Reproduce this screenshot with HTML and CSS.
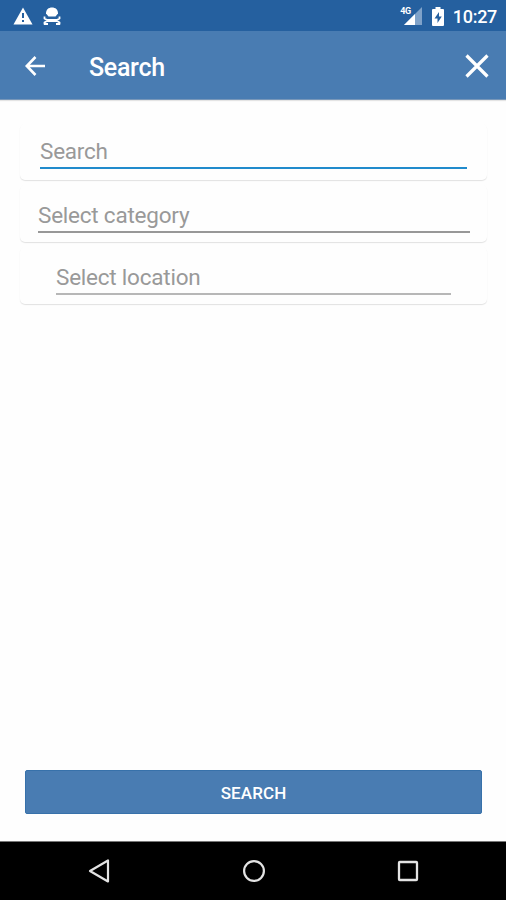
FILE: index.html
```html
<!DOCTYPE html>
<html lang="en">
<head>
<meta charset="utf-8">
<title>Search</title>
<link rel="stylesheet" href="styles.css">
</head>
<body>
<div class="status-bar">
  <svg class="warning" width="20" height="18" viewBox="0 0 20 18"><path d="M10 .5 19.500 17.500H.5Z" fill="#fff"/><path d="M10 6v5M10 13v2" stroke="#25609f" stroke-width="2"/></svg>
  <svg class="debug" width="18" height="19" viewBox="0 0 18 19" fill="none" stroke="#fff"><path d="M3 6.500C3 2.500 5.500 .5 9 .5s6 2 6 6L12.500 9.500h-7Z" fill="#fff" stroke="none"/><path d="M1.500 9.500v2l2.500 1.500h10l2.500-1.500v-2M1.500 17.500v-2L4 14h10l2.500 1.500v2" stroke-width="1.800"/><path d="M1 17h4M13 17h4" stroke-width="2"/></svg>
  <span class="spacer"></span>
  <span class="signal"><span class="network">4G</span><svg width="18" height="18" viewBox="0 0 18 18"><path d="M0 18 18 0V18Z" fill="#7fa2c9"/><path d="M0 18 11 7V18Z" fill="#fff"/></svg></span>
  <svg class="battery" width="12" height="19" viewBox="0 0 12 19"><path d="M3.500 0h5v2H11q1 0 1 1v15q0 1-1 1H1q-1 0-1-1V3q0-1 1-1h2.500Z" fill="#fff"/><path d="M7 5 2.500 11.500h3V16L9.800 9.500H7Z" fill="#25609f"/></svg>
  <span class="clock">10:27</span>
</div>
<header class="app-bar">
  <svg class="back" width="22" height="20" viewBox="0 0 22 20" fill="none" stroke="#fff" stroke-width="2.600"><path d="M21 10H3M11.500 1 2.800 10l8.700 9"/></svg>
  <h1 class="title">Search</h1>
  <svg class="close" width="24" height="24" viewBox="0 0 24 24" fill="none" stroke="#fff" stroke-width="3.200"><path d="M1.500 1.500l21 21M22.500 1.500l-21 21"/></svg>
</header>
<main class="content">
  <div class="card card-search"><div class="field focused"><span class="hint">Search</span></div></div>
  <div class="card card-category"><div class="field"><span class="hint">Select category</span></div></div>
  <div class="card card-location"><div class="field"><span class="hint">Select location</span></div></div>
  <button class="submit" type="button">SEARCH</button>
</main>
<nav class="nav-bar">
  <svg width="24" height="26" viewBox="0 0 24 26" fill="none" stroke="#e4e4e4" stroke-width="2.200" stroke-linejoin="round"><path d="M21 2.500v21L3 13Z"/></svg>
  <svg width="24" height="26" viewBox="0 0 24 26" fill="none" stroke="#e4e4e4" stroke-width="2.200"><circle cx="12" cy="13" r="9.900"/></svg>
  <svg width="24" height="26" viewBox="0 0 24 26" fill="none" stroke="#e4e4e4" stroke-width="2.300"><rect x="3" y="4" width="18" height="18" rx=".8"/></svg>
</nav>
</body>
</html>
```
FILE: styles.css
```css
* { box-sizing: border-box; }
body {
  margin: 0;
  width: 506px;
  height: 900px;
  display: flex;
  flex-direction: column;
  font-family: Roboto, sans-serif;
  background: #fefefe;
  overflow: hidden;
}
svg { display: block; flex: none; }
.status-bar {
  height: 31px;
  display: flex;
  align-items: center;
  padding: 2px 9px 0 13px;
  background: #25609f;
  color: #fff;
}
.warning { margin-top: -2px; }
.debug { margin-left: 10px; }
.spacer { flex: 1; }
.signal { display: flex; align-items: flex-start; margin-top: -2px; }
.network { font-size: 9px; line-height: 9px; font-weight: 700; letter-spacing: -0.3px; margin-right: -7px; position: relative; }
.battery { margin-left: 10px; margin-top: -1px; }
.clock { margin-left: 9px; font-size: 18px; line-height: 20px; font-weight: 500; letter-spacing: -0.3px; }
.app-bar {
  height: 69px;
  display: flex;
  align-items: center;
  padding: 1px 17px 0 24px;
  background: #497cb2;
  border-bottom: 1px solid #7897b9;
  box-shadow: 0 1px 1px #e4e4e4;
  color: #fff;
}
.title { flex: 1; margin: 4px 0 0 43px; font-size: 25px; line-height: 30px; font-weight: 500; letter-spacing: -0.3px; }
.content {
  flex: 1;
  display: flex;
  flex-direction: column;
  padding: 24px 19px 27px 20px;
}
.card {
  height: 57px;
  border-radius: 5px;
  background: #fefefe;
  box-shadow: 0 1px 1px #e2e2e2;
  margin-bottom: 5px;
}
.card-search { height: 56px; padding: 12px 20px 0; }
.card-category { padding: 15px 17px 0 18px; }
.card-location { padding: 14px 36px 0; }
.field { height: 33px; border-bottom: 2px solid #989898; }
.card-location .field { height: 34px; border-color: #b7b7b7; }
.card-search .field.focused { border-color: #218bcc; }
.hint { display: block; padding-top: 1px; font-size: 22.5px; line-height: 28px; letter-spacing: -0.22px; color: #999; }
.card-location .hint { padding-top: 2px; }
.submit {
  height: 44px;
  margin: auto 5px 0;
  padding: 2px 0 0;
  border: 1px solid #3771aa;
  border-radius: 2px;
  background: #497cb2;
  color: #fff;
  font: 500 17px/20px Roboto, sans-serif;
  letter-spacing: 0.1px;
}
.nav-bar {
  height: 59px;
  display: flex;
  justify-content: space-between;
  align-items: center;
  padding: 0 86px 0 87px;
  border-top: 1px solid #777;
  background: #000;
}
```
